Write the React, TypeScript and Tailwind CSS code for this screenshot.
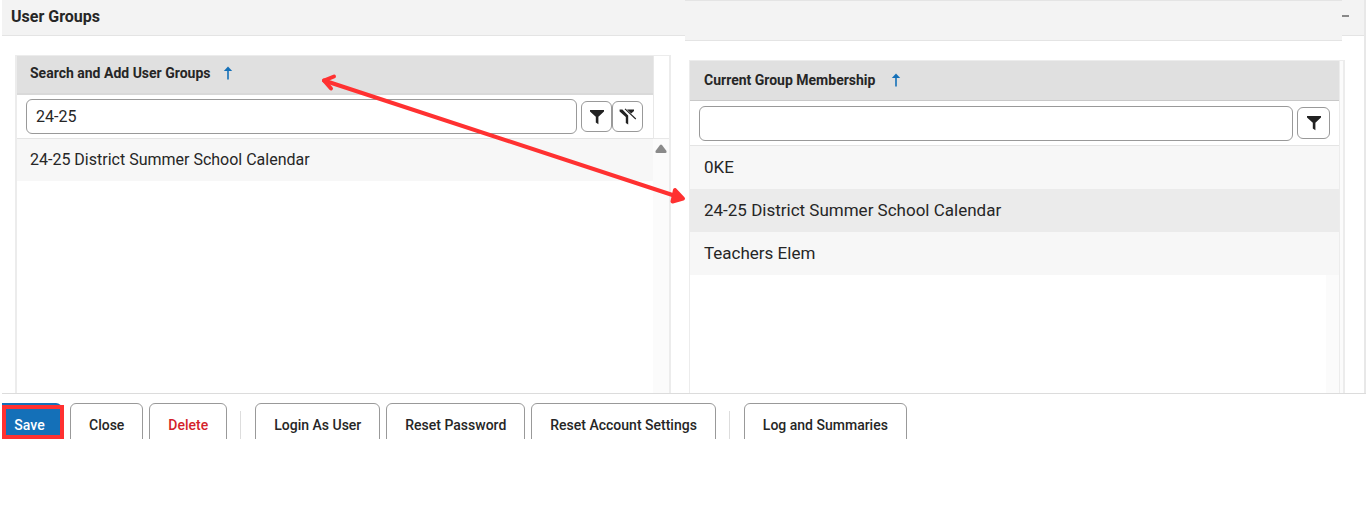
import { useState } from "react";
import clsx from "clsx";

function SortArrow() {
  return (
    <svg width="10" height="14" viewBox="0 0 10 14" fill="none" stroke="#1470b8" aria-hidden="true">
      <path d="M5 2V13.5" strokeWidth="1.6" />
      <path d="M5 0.4L9.2 5H0.8Z" fill="#1470b8" stroke="none" />
    </svg>
  );
}

function FilterIcon() {
  return (
    <svg width="16" height="16" viewBox="0 0 16 16" fill="#222" aria-hidden="true">
      <path d="M1 1H15V2.6L9.4 7.8V15.2L6.8 13.6V7.8L1 2.6Z" />
    </svg>
  );
}

function ClearFilterIcon() {
  return (
    <svg width="18" height="18" viewBox="0 0 18 18" fill="#222" aria-hidden="true">
      <path d="M0.6 1.6H3.4L9.2 7.4V16.6L6.8 15V9L0.6 3.4Z" />
      <path d="M8 1.6H15V3L12.2 5.6Z" />
      <path d="M9.2 6.4L14.4 11.4" stroke="#fff" strokeWidth="1" />
      <path d="M6 0.8L16.8 11" stroke="#222" strokeWidth="1.1" />
    </svg>
  );
}

function IconButton({ label, className, children }: { label: string; className?: string; children: React.ReactNode }) {
  return (
    <button
      type="button"
      aria-label={label}
      className={clsx("flex shrink-0 items-center justify-center rounded-md border border-[#999] bg-white", className)}
    >
      {children}
    </button>
  );
}

const ACTIONS = [
  [
    { label: "Close", danger: false },
    { label: "Delete", danger: true },
  ],
  [
    { label: "Login As User", danger: false },
    { label: "Reset Password", danger: false },
    { label: "Reset Account Settings", danger: false },
  ],
  [{ label: "Log and Summaries", danger: false }],
];

const MEMBERSHIPS = ["0KE", "24-25 District Summer School Calendar", "Teachers Elem"];

function SearchGrid() {
  const [query, setQuery] = useState("24-25");

  return (
    <div className="mt-[19px] ml-[13px] mr-[14px] flex h-[338px] border-x-2 border-t border-[#ececec]">
      <div className="min-w-0 flex-1">
        <div className="flex h-[39px] items-center gap-3 border-b-2 border-[#d9d9d9] bg-[#e0e0e0] pb-[3px] pl-[13px] text-sm font-bold">
          <span>Search and Add User Groups</span>
          <SortArrow />
        </div>
        <div className="flex h-11 items-center border-b border-[#e4e4e4] pr-[10px] pl-[9px]">
          <input
            aria-label="Search and Add User Groups"
            value={query}
            onChange={(e) => setQuery(e.target.value)}
            className="mr-1 h-[35px] min-w-0 flex-1 rounded-md border border-[#999] px-[9px] text-base outline-none"
          />
          <IconButton label="Filter" className="size-[31px]">
            <FilterIcon />
          </IconButton>
          <IconButton label="Clear filter" className="size-[31px]">
            <ClearFilterIcon />
          </IconButton>
        </div>
        <div className="flex h-[42px] items-center bg-[#f7f7f7] pl-[13px] text-base">
          24-25 District Summer School Calendar
        </div>
      </div>
      <div className="flex w-4 flex-col">
        <div className="h-[83px] border-b border-l border-[#e8e8e8]" />
        <div className="flex flex-1 justify-center bg-[#fbfbfb] pt-[5px]">
          <svg width="12" height="9" viewBox="0 0 12 9" fill="#8a8a8a" aria-hidden="true">
            <path d="M5 1Q6 0 7 1L11.5 7Q12 9 10.5 9H1.5Q0 9 0.5 7Z" />
          </svg>
        </div>
      </div>
    </div>
  );
}

function MembershipGrid() {
  const [query, setQuery] = useState("");

  return (
    <div className="mt-[19px] mr-[19px] ml-1 flex h-[333px] border-t border-r-2 border-l border-[#ececec]">
      <div className="min-w-0 flex-1">
        <div className="flex h-10 items-center gap-4 border-b border-[#c8c8c8] bg-[#e0e0e0] pb-[2px] pl-[14px] text-sm font-bold">
          <span>Current Group Membership</span>
          <SortArrow />
        </div>
        <div className="flex h-[45px] items-center border-b border-[#e4e4e4] pr-[9px] pl-[9px]">
          <input
            aria-label="Current Group Membership"
            value={query}
            onChange={(e) => setQuery(e.target.value)}
            className="mr-1 h-[35px] min-w-0 flex-1 rounded-md border border-[#999] px-[9px] text-base outline-none"
          />
          <IconButton label="Filter" className="h-8 w-[33px]">
            <FilterIcon />
          </IconButton>
        </div>
        <ul className="text-[17px]">
          {MEMBERSHIPS.map((name, i) => (
            <li
              key={name}
              className={clsx("flex h-[43px] items-center pl-[14px]", i === 1 ? "bg-[#ebebeb]" : "bg-[#f7f7f7]")}
            >
              {name}
            </li>
          ))}
        </ul>
        <div className="ml-auto h-[118px] w-[13px] bg-[#fbfbfb]" />
      </div>
      <div className="w-1 border-l border-[#ececec] bg-[#fbfbfb]" />
    </div>
  );
}

export default function App() {
  return (
    <div className="min-h-screen bg-white font-[Roboto,sans-serif] text-[#262626]">
      <main className="relative flex border-r-2 border-[#e8e8e8] pl-[2px]">
        <section className="w-[calc(50%+2px)] shrink-0">
          <h2 className="flex h-9 items-center border-b border-[#e4e4e4] bg-[#f3f3f3] pb-[2px] pl-[9px] text-base leading-5 font-bold">
            User Groups
          </h2>
          <SearchGrid />
        </section>
        <section className="min-w-0 flex-1">
          <div className="flex">
            <div className="h-[41px] flex-1 border-y border-[#e4e4e4] bg-[#f3f3f3]" />
            <button
              type="button"
              aria-label="Collapse"
              className="flex h-9 w-[22px] border-b border-[#e4e4e4] bg-[#f3f3f3] pt-[15px]"
            >
              <span className="h-[2px] w-[7px] bg-[#888]" />
            </button>
          </div>
          <MembershipGrid />
        </section>
        <svg
          className="pointer-events-none absolute top-[70px] left-[316px]"
          width="374"
          height="140"
          viewBox="316 70 374 140"
          fill="none"
          stroke="#ff3131"
          strokeWidth="4"
          strokeLinecap="round"
          strokeLinejoin="round"
          aria-hidden="true"
        >
          <path d="M324 80.5L674 195.5" />
          <path d="M334 76.5L324 80.5L331 88.5" />
          <path d="M675 190L683 198.5L672.5 201.5Z" fill="#ff3131" />
        </svg>
      </main>

      <footer className="ml-[2px] flex h-[46px] overflow-hidden border-t border-[#dcdcdc] pt-[9px] text-sm font-medium">
        <div className="relative h-11 shrink-0">
          <button type="button" className="h-11 w-[60px] rounded-tr-md bg-[#1470b8] pr-[5px] text-white">
            Save
          </button>
          <span className="pointer-events-none absolute top-[2px] left-0 h-[34px] w-[62px] border-4 border-[#ff3131]" />
        </div>
        <div className="ml-2 flex">
          {ACTIONS.map((group, i) => (
            <div
              key={i}
              className={clsx("flex gap-[6px]", i > 0 && "ml-[13px] before:mt-2 before:mr-2 before:w-px before:bg-[#ddd]")}
            >
              {group.map((action) => (
                <button
                  key={action.label}
                  type="button"
                  className={clsx(
                    "h-11 rounded-md border border-[#999] bg-white px-[18px] whitespace-nowrap",
                    action.danger && "text-[#d41f2b]",
                  )}
                >
                  {action.label}
                </button>
              ))}
            </div>
          ))}
        </div>
      </footer>
    </div>
  );
}
